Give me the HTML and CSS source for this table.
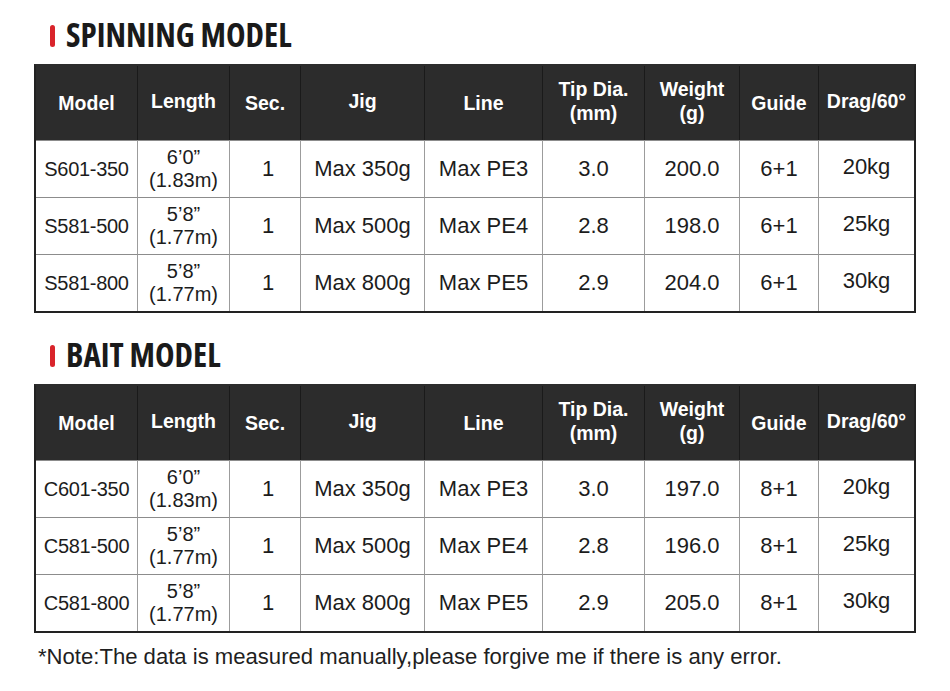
FILE: index.html
```html
<!DOCTYPE html>
<html>
<head>
<meta charset="utf-8">
<link rel="stylesheet" href="styles.css">
</head>
<body>
<div class="page">
  <h2 class="title title-first"><span class="bar"></span><span class="title-text">SPINNING MODEL</span></h2>
  <table class="spec">
    <thead>
      <tr>
        <th class="c1">Model</th>
        <th class="c2 up2">Length</th>
        <th class="c3">Sec.</th>
        <th class="c4 up3">Jig</th>
        <th class="c5">Line</th>
        <th class="c6 up2">Tip Dia.<br>(mm)</th>
        <th class="c7 up2">Weight<br>(g)</th>
        <th class="c8">Guide</th>
        <th class="c9 up2">Drag/60°</th>
      </tr>
    </thead>
    <tbody>
      <tr>
        <td class="model">S601-350</td><td class="len">6’0”<br>(1.83m)</td><td class="sec">1</td><td>Max 350g</td><td>Max PE3</td><td>3.0</td><td>200.0</td><td>6+1</td><td class="drag">20kg</td>
      </tr>
      <tr>
        <td class="model">S581-500</td><td class="len">5’8”<br>(1.77m)</td><td class="sec">1</td><td>Max 500g</td><td>Max PE4</td><td>2.8</td><td>198.0</td><td>6+1</td><td class="drag">25kg</td>
      </tr>
      <tr>
        <td class="model">S581-800</td><td class="len">5’8”<br>(1.77m)</td><td class="sec">1</td><td>Max 800g</td><td>Max PE5</td><td>2.9</td><td>204.0</td><td>6+1</td><td class="drag">30kg</td>
      </tr>
    </tbody>
  </table>

  <h2 class="title title-second"><span class="bar"></span><span class="title-text">BAIT MODEL</span></h2>
  <table class="spec">
    <thead>
      <tr>
        <th class="c1">Model</th>
        <th class="c2 up2">Length</th>
        <th class="c3">Sec.</th>
        <th class="c4 up3">Jig</th>
        <th class="c5">Line</th>
        <th class="c6 up2">Tip Dia.<br>(mm)</th>
        <th class="c7 up2">Weight<br>(g)</th>
        <th class="c8">Guide</th>
        <th class="c9 up2">Drag/60°</th>
      </tr>
    </thead>
    <tbody>
      <tr>
        <td class="model">C601-350</td><td class="len">6’0”<br>(1.83m)</td><td class="sec">1</td><td>Max 350g</td><td>Max PE3</td><td>3.0</td><td>197.0</td><td>8+1</td><td class="drag">20kg</td>
      </tr>
      <tr>
        <td class="model">C581-500</td><td class="len">5’8”<br>(1.77m)</td><td class="sec">1</td><td>Max 500g</td><td>Max PE4</td><td>2.8</td><td>196.0</td><td>8+1</td><td class="drag">25kg</td>
      </tr>
      <tr>
        <td class="model">C581-800</td><td class="len">5’8”<br>(1.77m)</td><td class="sec">1</td><td>Max 800g</td><td>Max PE5</td><td>2.9</td><td>205.0</td><td>8+1</td><td class="drag">30kg</td>
      </tr>
    </tbody>
  </table>

  <p class="note">*Note:The data is measured manually,please forgive me if there is any error.</p>
</div>
</body>
</html>
```

FILE: styles.css
```css
html, body {
  margin: 0;
  padding: 0;
  background: #ffffff;
}

.page {
  width: 950px;
  padding: 0 0 0 34px;
  box-sizing: border-box;
  font-family: "Liberation Sans", Arial, sans-serif;
  color: #1c1c1c;
}

.title {
  display: flex;
  align-items: center;
  gap: 11px;
  height: 36px;
  margin: 0 0 9px 0;
  padding-left: 16px;
  font-family: "Open Sans", "Liberation Sans", sans-serif;
  font-stretch: 75%;
  font-weight: 700;
  font-size: 33px;
  line-height: 36px;
  color: #1a1a1a;
}

.title-first {
  margin-top: 19px;
}

.title-second {
  margin-top: 26px;
}

.title-text {
  position: relative;
  top: -2px;
}

.bar {
  display: block;
  width: 5px;
  height: 22px;
  border-radius: 3px;
  background: #d9242b;
  position: relative;
  top: -1px;
}

.spec {
  width: 882px;
  table-layout: fixed;
  border-collapse: separate;
  border-spacing: 0;
  border: 2px solid #222222;
  border-top-color: #2c2c2c;
}

.spec th,
.spec td {
  box-sizing: border-box;
  padding: 0;
  text-align: center;
  vertical-align: middle;
}

.spec th {
  height: 74px;
  background: #2c2c2c;
  color: #ffffff;
  font-weight: bold;
  font-size: 19.5px;
  line-height: 24px;
  border-left: 1px solid #1a1a1a;
}

.spec th.c1 { width: 101px; border-left: none; }
.spec th.c2 { width: 92px; }
.spec th.c3 { width: 71px; }
.spec th.c4 { width: 124px; }
.spec th.c5 { width: 118px; }
.spec th.c6 { width: 102px; }
.spec th.c7 { width: 95px; }
.spec th.c8 { width: 79px; }
.spec th.c9 { width: 96px; }

.spec th.up2 { padding-bottom: 4px; }
.spec th.up3 { padding-bottom: 5px; }

.spec td {
  height: 57px;
  font-size: 22px;
  line-height: 24px;
  color: #1c1c1c;
  border-left: 1px solid #9c9c9c;
  border-top: 1px solid #8c8c8c;
}

.spec td.model {
  border-left: none;
  font-size: 20px;
  letter-spacing: -0.3px;
}

.spec td.len {
  font-size: 20px;
  line-height: 23px;
}

.spec td.sec {
  padding-left: 6px;
}

.spec td.drag {
  padding-bottom: 5px;
}

.note {
  margin: 12px 0 0 4px;
  font-size: 22.1px;
  line-height: 24px;
  color: #1f1f1f;
}
```
